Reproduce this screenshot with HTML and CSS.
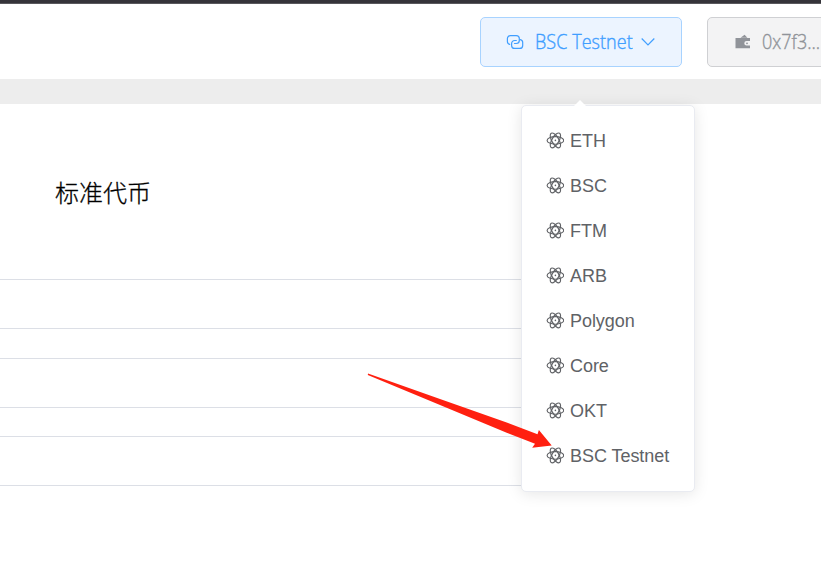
FILE: index.html
```html
<!DOCTYPE html>
<html lang="zh">
<head>
<meta charset="utf-8">
<title>标准代币</title>
<link rel="stylesheet" href="styles.css">
</head>
<body>
<svg width="0" height="0" class="defs">
  <symbol id="atom" viewBox="0 0 18 18">
    <g fill="none" stroke="currentColor" stroke-width="1.15">
      <ellipse cx="9.4" cy="9.4" rx="8.3" ry="3.8"/>
      <ellipse cx="9.4" cy="9.4" rx="8.3" ry="3.5" transform="rotate(60 9.4 9.4)"/>
      <ellipse cx="9.4" cy="9.4" rx="8.3" ry="3.5" transform="rotate(120 9.4 9.4)"/>
    </g>
    <circle cx="9.4" cy="9.4" r=".8" fill="currentColor"/>
  </symbol>
</svg>
<div class="topline"></div>
<header class="header">
  <button class="btn btn-network">
    <svg class="link-icon" viewBox="0 0 18 18" fill="none" stroke="currentColor" stroke-width="1.2" stroke-linecap="round"><path d="M3.7 11.3C2.3 11 1.4 9.9 1.4 8.5V5.6a3 3 0 0 1 3-3h5.900a3 3 0 0 1 3 3v1.900a3 3 0 0 1-3 3H8.500"/><path d="M14.300 6.700c1.500.3 2.400 1.400 2.400 2.800v2.900a3 3 0 0 1-3 3H8.600a3 3 0 0 1-3-3v-1.900a3 3 0 0 1 3-3h1.700"/></svg>
    <span class="label">BSC Testnet</span>
    <svg class="chevron" viewBox="0 0 14 10" fill="none" stroke="currentColor" stroke-width="1.2"><path d="M.7 1.500 7 7.800l6.300-6.300"/></svg>
  </button>
  <button class="btn btn-wallet">
    <svg class="wallet-icon" viewBox="0 0 16 16" fill="currentColor"><path d="M5.500 3.700 9.600.7l2.800 3z"/><path d="M.5 4.100h14.500v3h-3.500a2.200 2.200 0 0 0 0 4.400h3.500v2.700H.5z"/><circle cx="12" cy="9.300" r=".9"/></svg>
    <span class="label wallet-label">0x7f3...</span>
  </button>
</header>
<div class="band"></div>
<main class="content">
  <h1 class="title">标准代币</h1>
  <div class="field"></div>
  <div class="field"></div>
  <div class="field"></div>
</main>
<div class="menu">
  <ul class="list">
    <li><svg><use href="#atom"/></svg>ETH</li>
    <li><svg><use href="#atom"/></svg>BSC</li>
    <li><svg><use href="#atom"/></svg>FTM</li>
    <li><svg><use href="#atom"/></svg>ARB</li>
    <li><svg><use href="#atom"/></svg>Polygon</li>
    <li><svg><use href="#atom"/></svg>Core</li>
    <li><svg><use href="#atom"/></svg>OKT</li>
    <li><svg><use href="#atom"/></svg>BSC Testnet</li>
  </ul>
</div>
<svg class="arrow" viewBox="0 0 186 76"><path fill="#ff2010" d="M1 .5 73 26 139.700 49.500 170.500 61.300 171.900 57 184.700 72.600 165.200 74.800 168 70.700 139.700 59.700 73 32 .8 2z"/></svg>
</body>
</html>
```
FILE: styles.css
```css
* { box-sizing: border-box; }
body {
  margin: 0;
  width: 821px;
  height: 575px;
  overflow: hidden;
  position: relative;
  background: #fff;
  font-family: "Liberation Sans", "Noto Sans CJK SC", sans-serif;
}
.defs { position: absolute; }
.topline { height: 4px; background: #35343a; border-bottom: 1px solid #59585d; }
.header {
  height: 75px;
  padding: 13px 0 0 480px;
  display: flex;
  gap: 25px;
  overflow: hidden;
}
.btn {
  height: 50px;
  flex: none;
  display: flex;
  align-items: center;
  border: 1px solid;
  border-radius: 5px;
  padding: 0 0 1px 25px;
  font: 350 18px "Open Sans", "Noto Sans", sans-serif;
  text-align: left;
}
.btn-network { width: 202px; color: #409eff; background: #ecf4ff; border-color: #a8d3ff; }
.btn-wallet { width: 202px; color: #909399; background: #f3f3f4; border-color: #cfd0d3; padding-left: 27px; }
.label {
  width: 98px;
  margin: 0 0 2px 11px;
  white-space: nowrap;
  letter-spacing: .05px;
  transform: scaleY(1.08);
  -webkit-text-stroke: .35px currentColor;
}
.link-icon { width: 18px; height: 18px; }
.wallet-icon { width: 16px; height: 16px; }
.wallet-label { letter-spacing: 0; }
.chevron { width: 14px; height: 10px; margin-left: 8px; }
.band { height: 25px; background: #ededed; }
.content { padding-top: 70px; }
.title {
  margin: 0 0 70px 55px;
  height: 35px;
  font: 300 24px/35px "Noto Sans CJK SC", sans-serif;
  -webkit-text-stroke: .3px #000;
  color: #000;
}
.field {
  height: 50px;
  margin-bottom: 29px;
  border: solid #dcdfe6;
  border-width: 1px 0;
  width: 522px;
}
.field:last-child { margin-top: -1px; }
.menu {
  position: absolute;
  left: 521px;
  top: 105px;
  width: 174px;
  height: 387px;
  padding: 13px 0 0 24px;
  background: #fff;
  border: 1px solid #e9ebf1;
  border-radius: 5px;
  box-shadow: 0 2px 15px rgba(0, 0, 0, .1);
}
.menu::before {
  content: "";
  position: absolute;
  left: 52px;
  top: -6px;
  border: solid transparent;
  border-width: 0 6px 6px;
  border-bottom-color: #fff;
}
.list { margin: 0; padding: 0; list-style: none; }
.list li {
  height: 45px;
  display: flex;
  align-items: center;
  gap: 6px;
  font-size: 18px;
  letter-spacing: -.05px;
  color: #606266;
  white-space: nowrap;
}
.list svg { width: 18px; height: 18px; margin-bottom: 3px; flex: none; overflow: visible; }
.arrow { position: absolute; left: 367px; top: 373px; width: 186px; height: 76px; }
```
